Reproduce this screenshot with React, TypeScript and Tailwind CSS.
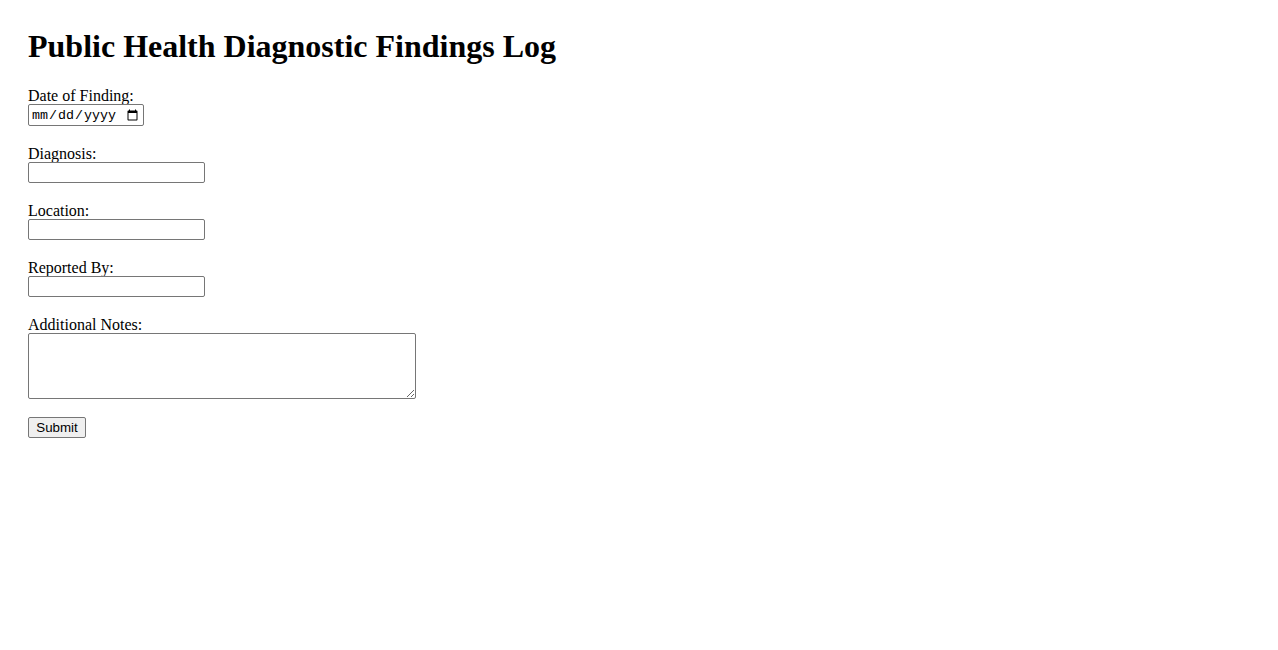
import { useState } from "react"

const inputBase =
  "block box-border border border-[#767676] rounded-[2px] bg-white px-[2px] text-[13.333px] text-black outline-none"

const labelClass = "block h-[18px] leading-[20px]"

export default function App() {
  const [date, setDate] = useState("")

  return (
    <div className="min-h-[650px] bg-white p-[28px] font-['Liberation_Serif','Times_New_Roman',serif] text-[16px] text-black">
      <h1 className="mb-[21px] text-[32px] font-bold leading-[37px]">Public Health Diagnostic Findings Log</h1>

      <form className="flex flex-col items-start" onSubmit={(e) => e.preventDefault()}>
        <label htmlFor="date" className={labelClass}>Date of Finding:</label>
        <input
          id="date"
          type="date"
          value={date}
          onChange={(e) => setDate(e.target.value)}
          className={`${inputBase} mb-[18px] h-[22px] w-[116px] pt-[2px] font-['Liberation_Mono',monospace]`}
        />

        <label htmlFor="diagnosis" className={labelClass}>Diagnosis:</label>
        <input id="diagnosis" type="text" className={`${inputBase} mb-[18px] h-[21px] w-[177px]`} />

        <label htmlFor="location" className={labelClass}>Location:</label>
        <input id="location" type="text" className={`${inputBase} mb-[18px] h-[21px] w-[177px]`} />

        <label htmlFor="reported" className={labelClass}>Reported By:</label>
        <input id="reported" type="text" className={`${inputBase} mb-[18px] h-[21px] w-[177px]`} />

        <label htmlFor="notes" className={labelClass}>Additional Notes:</label>
        <textarea id="notes" className={`${inputBase} mb-[18px] h-[66px] w-[388px] resize`} />

        <button
          type="submit"
          className="h-[21px] w-[58px] rounded-[2px] border border-[#767676] bg-[#efefef] font-['Liberation_Sans',Arial,sans-serif] text-[13.333px] leading-none text-black"
        >
          Submit
        </button>
      </form>
    </div>
  )
}
